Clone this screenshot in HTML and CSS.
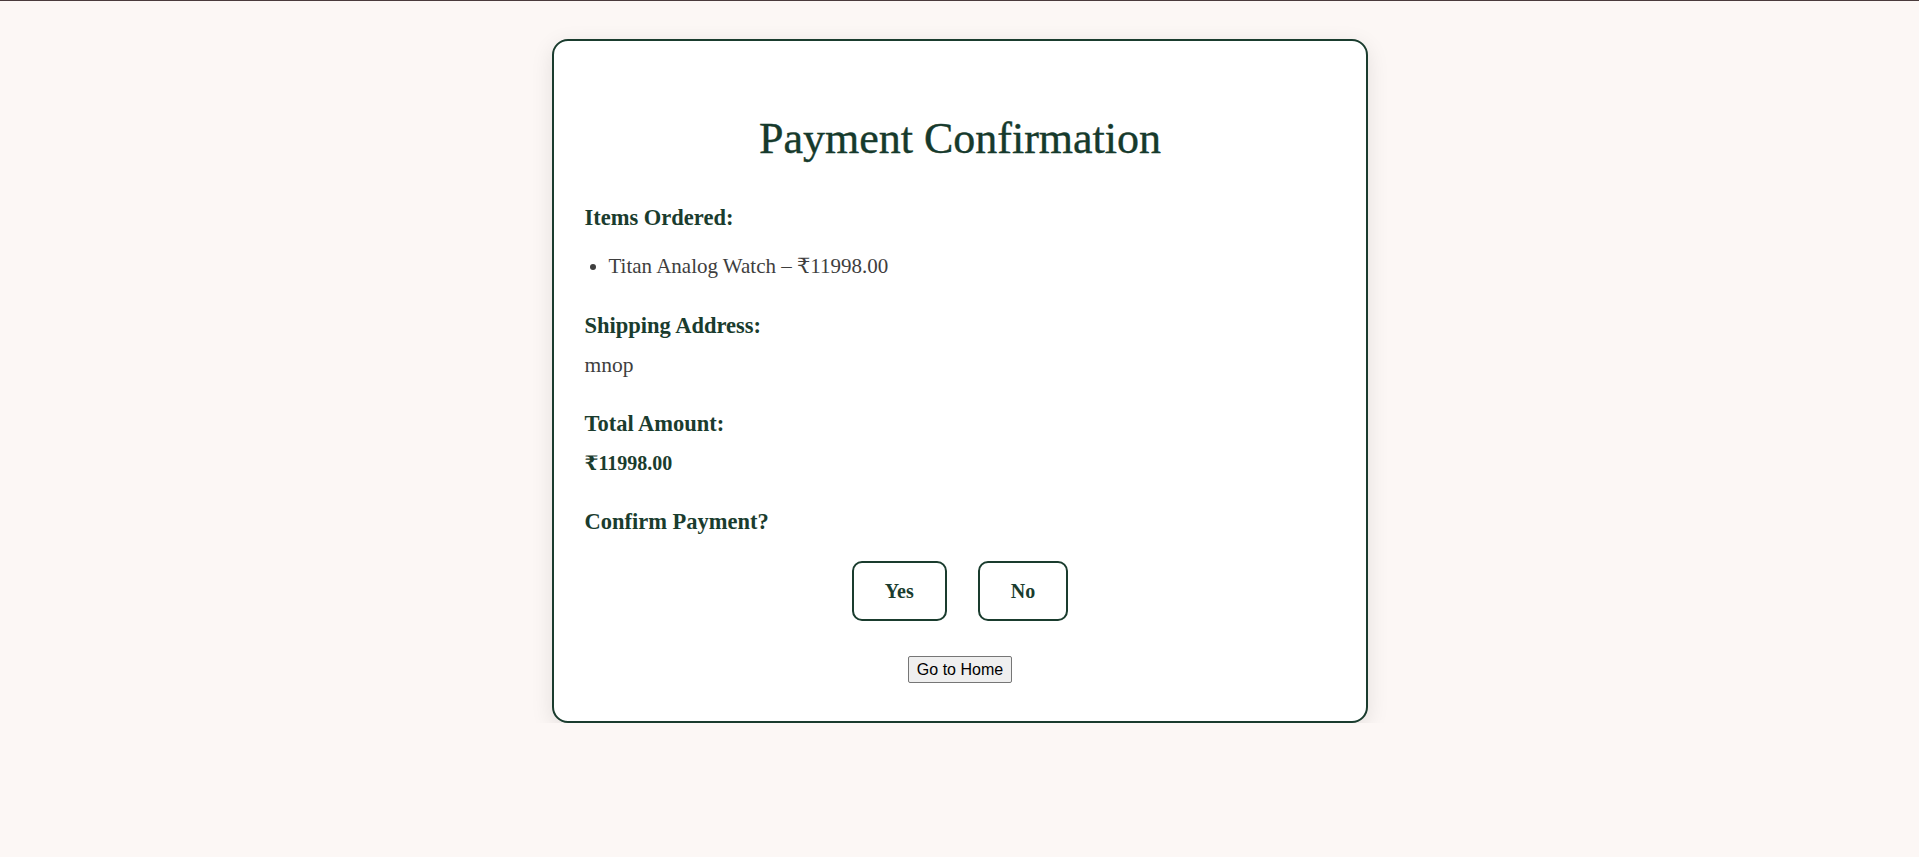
FILE: index.html
```html
<!DOCTYPE html>
<html lang="en">
<head>
<meta charset="utf-8">
<title>Payment Confirmation</title>
<link rel="stylesheet" href="styles.css">
</head>
<body>
<div class="topbar"></div>
<main class="page">
  <div class="card">
    <h1 class="title">Payment Confirmation</h1>
    <section class="section">
      <h3 class="label">Items Ordered:</h3>
      <ul class="items">
        <li>Titan Analog Watch – ₹11998.00</li>
      </ul>
    </section>
    <section class="section after-list">
      <h3 class="label">Shipping Address:</h3>
      <p class="value">mnop</p>
    </section>
    <section class="section">
      <h3 class="label">Total Amount:</h3>
      <p class="value strong">₹11998.00</p>
    </section>
    <section class="section">
      <h3 class="label">Confirm Payment?</h3>
      <div class="actions">
        <button class="choice">Yes</button>
        <button class="choice">No</button>
      </div>
    </section>
    <div class="home-row">
      <button class="home">Go to Home</button>
    </div>
  </div>
</main>
</body>
</html>
```

FILE: styles.css
```css
html, body {
  margin: 0;
  padding: 0;
}

html {
  background: #fcf7f5;
}

body {
  background: #fcf7f5;
  font-family: "Liberation Serif", "DejaVu Serif", serif;
  color: #1a3c2e;
}

.topbar {
  height: 1px;
  background: #4a3b3c;
}

.page {
  padding-top: 38px;
  display: flex;
  justify-content: center;
}

.card {
  box-sizing: border-box;
  width: 816px;
  background: #ffffff;
  border: 2px solid #1a3c2e;
  border-radius: 16px;
  box-shadow: 0 6px 22px rgba(0, 0, 0, 0.10);
  padding: 30px 30px 38px 31px;
}

.title {
  margin: 42px 0 39px;
  font-size: 44px;
  line-height: 52px;
  font-weight: 400;
  text-align: center;
  color: #163a2c;
  -webkit-text-stroke: 0.4px #163a2c;
}

.section + .section {
  margin-top: 32px;
}

.section.after-list {
  margin-top: 33px;
}

.label {
  margin: 0;
  font-size: 22.5px;
  line-height: 28px;
  font-weight: 700;
  color: #1a3c2e;
}

.items {
  margin: 21px 0 0;
  padding-left: 24px;
  font-size: 21px;
  line-height: 26px;
  color: #3e3e3e;
}

.value {
  margin: 12px 0 0;
  font-size: 21.5px;
  line-height: 26px;
  color: #3e3e3e;
}

.value.strong {
  font-size: 20px;
  font-weight: 700;
  color: #1a3c2e;
}

.actions {
  margin-top: 25px;
  display: flex;
  justify-content: center;
  gap: 31px;
}

.choice {
  font-family: "Liberation Serif", "DejaVu Serif", serif;
  font-size: 20px;
  font-weight: 700;
  line-height: 26px;
  padding: 15px 31px;
  background: #ffffff;
  color: #1a3c2e;
  border: 2px solid #1a3c2e;
  border-radius: 10px;
  cursor: pointer;
}

.home-row {
  margin-top: 35px;
  display: flex;
  justify-content: center;
}

.home {
  font-family: "Liberation Sans", Arial, sans-serif;
  font-size: 16px;
  line-height: 19px;
  padding: 3px 8px;
  background: #efefef;
  color: #000000;
  border: 1px solid #767676;
  border-radius: 2px;
}
```
